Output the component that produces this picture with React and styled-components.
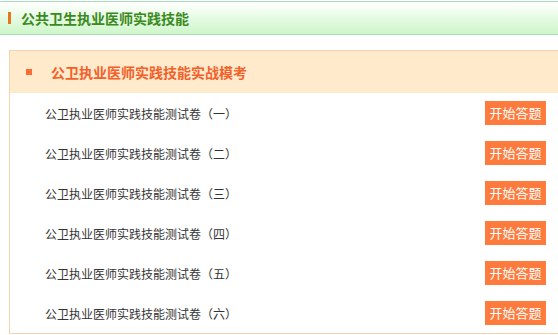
import React from 'react';
import styled, { createGlobalStyle } from 'styled-components';

const papers = ['一', '二', '三', '四', '五', '六'];

const App = () => {
  return (
    <>
      <GlobalStyle />
      <Page>
        <TopBar>
          <TopMark />
          <TopTitle>公共卫生执业医师实践技能</TopTitle>
        </TopBar>
        <Card>
          <CardHeader>
            <Bullet />
            <CardTitle>公卫执业医师实践技能实战模考</CardTitle>
          </CardHeader>
          {papers.map((num) => (
            <Row key={num}>
              <RowName>公卫执业医师实践技能测试卷（{num}）</RowName>
              <StartButton>开始答题</StartButton>
            </Row>
          ))}
        </Card>
      </Page>
    </>
  );
};

export default App;

const GlobalStyle = createGlobalStyle`
  html, body {
    margin: 0;
    padding: 0;
    background: #fff;
    overflow: hidden;
  }
  body {
    font-family: "Noto Sans CJK SC", "Liberation Sans", sans-serif;
  }
`;

const Page = styled.div`
  width: 558px;
  padding-top: 1px;
`;

const TopBar = styled.div`
  display: flex;
  align-items: center;
  height: 32px;
  border-top: 1px solid #a9dcbc;
  border-bottom: 1px solid #a9dcbc;
  background: linear-gradient(to bottom, #ffffff 0%, #e9fbe6 45%, #cdf6c9 100%);
`;

const TopMark = styled.span`
  width: 3px;
  height: 12px;
  margin-left: 8px;
  background: #e4781f;
`;

const TopTitle = styled.h2`
  margin: 0 0 0 10px;
  font-size: 14px;
  font-weight: bold;
  color: #3b8a1e;
  line-height: 1;
`;

const Card = styled.div`
  margin: 15px -3px 0 9px;
  border: 1px solid #f8d3b2;
`;

const CardHeader = styled.div`
  display: flex;
  align-items: center;
  height: 42px;
  background: #ffeacc;
`;

const Bullet = styled.span`
  width: 6px;
  height: 6px;
  margin-left: 16px;
  background: #fb6b35;
`;

const CardTitle = styled.h3`
  margin: 0 0 0 19px;
  font-size: 14px;
  font-weight: bold;
  color: #f2612a;
  line-height: 1;
`;

const Row = styled.div`
  display: flex;
  align-items: center;
  justify-content: space-between;
  height: 40px;
  padding: 0 14px 0 35px;
`;

const RowName = styled.span`
  font-size: 12px;
  color: #333;
`;

const StartButton = styled.button`
  width: 61px;
  height: 24px;
  border: none;
  padding: 0;
  background: #fe7a3d;
  color: #fff;
  font-family: "Noto Sans CJK SC", "Liberation Sans", sans-serif;
  font-size: 13px;
  line-height: 24px;
  cursor: pointer;
`;
